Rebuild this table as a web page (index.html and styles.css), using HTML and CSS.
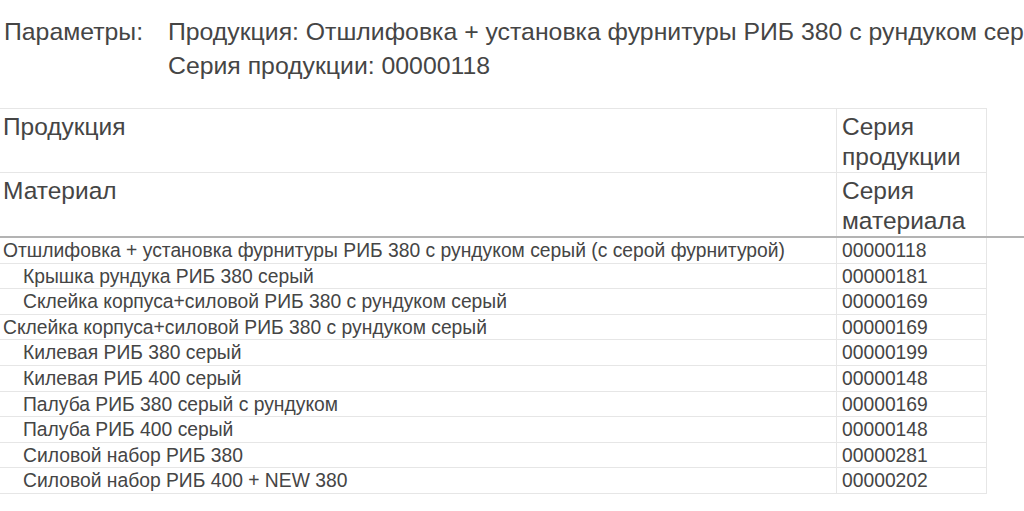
FILE: index.html
```html
<!DOCTYPE html>
<html lang="ru">
<head>
<meta charset="utf-8">
<title>Отчет</title>
<link rel="stylesheet" href="styles.css">
</head>
<body>
<div class="page">
  <div class="params">
    <div class="params-label">Параметры:</div>
    <div class="params-values">
      <div>Продукция: Отшлифовка + установка фурнитуры РИБ 380 с рундуком серый (с серой фурнитурой)</div>
      <div>Серия продукции: 00000118</div>
    </div>
  </div>

  <div class="report">
    <div class="report-head">
      <div class="grid head-grid">
        <div class="cell hcell">Продукция</div>
        <div class="cell hcell num">Серия<br>продукции</div>
        <div class="cell hcell last">Материал</div>
        <div class="cell hcell num last">Серия<br>материала</div>
      </div>
    </div>
    <div class="grid body-grid">
      <div class="cell bcell">Отшлифовка + установка фурнитуры РИБ 380 с рундуком серый (с серой фурнитурой)</div>
      <div class="cell bcell num">00000118</div>
      <div class="cell bcell child">Крышка рундука РИБ 380 серый</div>
      <div class="cell bcell num">00000181</div>
      <div class="cell bcell child">Склейка корпуса+силовой РИБ 380 с рундуком серый</div>
      <div class="cell bcell num">00000169</div>
      <div class="cell bcell">Склейка корпуса+силовой РИБ 380 с рундуком серый</div>
      <div class="cell bcell num">00000169</div>
      <div class="cell bcell child">Килевая РИБ 380 серый</div>
      <div class="cell bcell num">00000199</div>
      <div class="cell bcell child">Килевая РИБ 400 серый</div>
      <div class="cell bcell num">00000148</div>
      <div class="cell bcell child">Палуба РИБ 380 серый с рундуком</div>
      <div class="cell bcell num">00000169</div>
      <div class="cell bcell child">Палуба РИБ 400 серый</div>
      <div class="cell bcell num">00000148</div>
      <div class="cell bcell child">Силовой набор РИБ 380</div>
      <div class="cell bcell num">00000281</div>
      <div class="cell bcell child">Силовой набор РИБ 400 + NEW 380</div>
      <div class="cell bcell num">00000202</div>
    </div>
  </div>
</div>
</body>
</html>
```
FILE: styles.css
```css
html, body {
  margin: 0;
  padding: 0;
  background: #ffffff;
}

body {
  font-family: "Liberation Sans", Arial, sans-serif;
  color: #454545;
  overflow: hidden;
}

.page {
  width: 1024px;
  overflow: hidden;
}

.params {
  display: flex;
  padding: 15px 0 0 4px;
  font-size: 24.8px;
  line-height: 34px;
  white-space: nowrap;
}

.params-label {
  width: 164px;
  flex: none;
}

.params-values {
  flex: none;
}

.report {
  margin-top: 25px;
}

.report-head {
  border-bottom: 2px solid #b3b3b3;
}

.grid {
  display: grid;
  grid-template-columns: 837px 150px;
  width: 987px;
}

.head-grid {
  border-top: 1px solid #e6e6e6;
}

.cell {
  border-right: 1px solid #e6e6e6;
  border-bottom: 1px solid #e6e6e6;
  white-space: nowrap;
  overflow: hidden;
}

.hcell {
  font-size: 24.5px;
  line-height: 30px;
  height: 64px;
  box-sizing: border-box;
  padding: 3px 3px 0 3px;
}

.hcell.last {
  border-bottom: none;
  height: 63px;
}

.cell.num {
  padding-left: 5px;
}

.bcell {
  font-size: 19.3px;
  line-height: 25px;
  height: 25.6px;
  box-sizing: border-box;
  padding: 0 3px 0 3px;
}

.bcell.child {
  padding-left: 23px;
}
```
